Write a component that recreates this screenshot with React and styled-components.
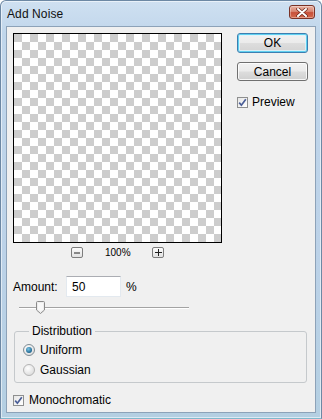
import React from 'react';
import styled, { createGlobalStyle, css } from 'styled-components';

const GlobalStyle = createGlobalStyle`
    html, body {
        margin: 0;
        padding: 0;
        background: #ffffff;
    }
    body {
        font-family: 'Liberation Sans', Arial, sans-serif;
        font-size: 12px;
        color: #000;
    }
`;

const WINDOW = styled.div`
    box-sizing: border-box;
    width: 322px;
    height: 419px;
    display: flex;
    flex-direction: column;
    border: 1px solid #6d88a4;
    border-bottom-color: #7fb8cc;
    border-radius: 6px 6px 0 0;
    padding: 0 5px 5px;
    background: linear-gradient(180deg, #cfe0f1 0%, #c0d6eb 8%, #bcd2e8 60%, #b4cfe2 100%);
    box-shadow: inset 0 0 0 1px rgba(255, 255, 255, 0.55);
`;

const TITLEBAR = styled.div`
    height: 25px;
    display: flex;
    align-items: center;
    justify-content: space-between;
    padding-left: 1px;

    .title {
        font-size: 12px;
        color: #111;
        letter-spacing: 0.1px;
    }
`;

const CLOSE = styled.div`
    align-self: flex-start;
    margin-top: 4px;
    margin-right: 1px;
    width: 26px;
    height: 14px;
    box-sizing: border-box;
    border: 1px solid #7a3226;
    border-radius: 3px;
    background: linear-gradient(180deg, #e9b3a4 0%, #d98672 45%, #c7503a 55%, #d66a4c 100%);
    display: flex;
    align-items: center;
    justify-content: center;
    box-shadow: inset 0 0 0 1px rgba(255, 255, 255, 0.35);
`;

const CLIENT = styled.div`
    flex: 1;
    background: #f0f0f0;
    border: 1px solid #8da2b8;
    padding: 6px 7px 0 6px;
    display: flex;
    flex-direction: column;
`;

const TOPROW = styled.div`
    display: flex;
    gap: 15px;
`;

const PREVIEWCOL = styled.div`
    width: 209px;
    display: flex;
    flex-direction: column;
`;

const PREVIEWBOX = styled.div`
    box-sizing: border-box;
    width: 209px;
    height: 210px;
    border: 1px solid #000;
    background-color: #fff;
    background-image: conic-gradient(#fff 25%, #cdcdcd 0 50%, #fff 0 75%, #cdcdcd 0);
    background-size: 16px 16px;
`;

const ZOOMBAR = styled.div`
    margin-top: 4px;
    height: 11px;
    display: flex;
    align-items: center;
    justify-content: center;
    gap: 22px;
    font-size: 10px;

    span {
        width: 25px;
        text-align: center;
        white-space: nowrap;
    }
`;

const ZOOMBTN = styled.div`
    box-sizing: border-box;
    width: 12px;
    height: 11px;
    border: 1px solid #7d7d7d;
    border-radius: 2px;
    background: linear-gradient(180deg, #fbfbfb, #e2e2e2);
    display: flex;
    align-items: center;
    justify-content: center;
`;

const SIDECOL = styled.div`
    width: 71px;
    display: flex;
    flex-direction: column;
`;

const BUTTON = styled.div`
    box-sizing: border-box;
    height: ${p => (p.$default ? 20 : 19)}px;
    margin-bottom: 9px;
    border: 1px solid #707070;
    border-radius: 3px;
    background: linear-gradient(180deg, #f2f2f2 0%, #ebebeb 48%, #dddddd 52%, #cfcfcf 100%);
    box-shadow: inset 0 0 0 1px rgba(255, 255, 255, 0.8);
    display: flex;
    align-items: center;
    justify-content: center;
    font-size: 12px;
    color: #000;

    ${p => p.$default && css`
        border-color: #3c7fb1;
        box-shadow: inset 0 0 0 1px #5fd0f0, inset 0 0 0 2px rgba(220, 244, 252, 0.8);
        background: linear-gradient(180deg, #f2f2f2 0%, #ebebeb 48%, #dddddd 52%, #d3d3d3 100%);
    `}
`;

const CHECKROW = styled.div`
    display: flex;
    align-items: center;
    gap: ${p => p.$gap || 5}px;
    margin-top: ${p => p.$top || 0}px;
    height: 12px;
`;

const BOX = styled.div`
    box-sizing: border-box;
    width: 11px;
    height: 11px;
    border: 1px solid #8e8f8f;
    background: linear-gradient(135deg, #e6e6e6, #ffffff);
    display: flex;
    align-items: center;
    justify-content: center;
`;

const AMOUNTROW = styled.div`
    margin-top: 18px;
    display: flex;
    align-items: center;
    height: 21px;

    .label {
        width: 53px;
    }
    .unit {
        margin-left: 5px;
    }
`;

const INPUT = styled.div`
    box-sizing: border-box;
    width: 55px;
    height: 21px;
    border: 1px solid #e3e9ef;
    border-top-color: #abadb3;
    background: #fff;
    padding-left: 5px;
    display: flex;
    align-items: center;
`;

const SLIDER = styled.div`
    margin: 5px 0 0 6px;
    width: 170px;
    height: 12px;
    display: flex;
    align-items: center;

    .track {
        position: relative;
        width: 100%;
        height: 2px;
        border-top: 1px solid #a3a3a3;
        border-bottom: 1px solid #ffffff;
        box-sizing: border-box;
    }
    .thumb {
        position: absolute;
        left: 17px;
        top: -7px;
    }
`;

const GROUP = styled.fieldset`
    margin: 10px 0 0 1px;
    width: 293px;
    box-sizing: border-box;
    min-width: 0;
    border: 1px solid #c5c9cc;
    border-radius: 3px;
    padding: 0 0 2px 8px;

    legend {
        margin-left: 6px;
        padding: 0 3px;
        line-height: 14px;
        font-size: 12px;
    }
`;

const RADIOROW = styled.div`
    height: 20px;
    display: flex;
    align-items: center;
    gap: 5px;
    margin-top: ${p => p.$top || 0}px;
`;

const Check = () => (
    <BOX>
        <svg width="9" height="9" viewBox="0 0 9 9">
            <path d="M1.2 4.6 L3.4 7.2 L7.8 1.2" fill="none" stroke="#4a5e97" strokeWidth="1.7" />
        </svg>
    </BOX>
);

const Radio = ({ checked }) => (
    <svg width="12" height="12" viewBox="0 0 12 12">
        <defs>
            <radialGradient id="rbg" cx="40%" cy="35%" r="70%">
                <stop offset="0" stopColor="#ffffff" />
                <stop offset="1" stopColor="#dadada" />
            </radialGradient>
            <radialGradient id="rdot" cx="40%" cy="35%" r="70%">
                <stop offset="0" stopColor="#7ac6e6" />
                <stop offset="1" stopColor="#135a86" />
            </radialGradient>
        </defs>
        <circle cx="6" cy="6" r="5.5" fill="url(#rbg)" stroke={checked ? '#7f8c94' : '#b4b4b4'} />
        {checked && <circle cx="6" cy="6" r="3" fill="url(#rdot)" />}
    </svg>
);

const App = () => {
    return (
        <>
            <GlobalStyle />
            <WINDOW>
                <TITLEBAR>
                    <span className="title">Add Noise</span>
                    <CLOSE>
                        <svg width="12" height="9" viewBox="0 0 12 9">
                            <path d="M2 1 L10 8 M10 1 L2 8" stroke="#6a2418" strokeWidth="3.4" strokeLinecap="round" />
                            <path d="M2 1 L10 8 M10 1 L2 8" stroke="#ffffff" strokeWidth="2" strokeLinecap="round" />
                        </svg>
                    </CLOSE>
                </TITLEBAR>
                <CLIENT>
                    <TOPROW>
                        <PREVIEWCOL>
                            <PREVIEWBOX />
                            <ZOOMBAR>
                                <ZOOMBTN>
                                    <svg width="6" height="6" viewBox="0 0 6 6">
                                        <path d="M0 3 H6" stroke="#222" strokeWidth="1" />
                                    </svg>
                                </ZOOMBTN>
                                <span>100%</span>
                                <ZOOMBTN>
                                    <svg width="7" height="7" viewBox="0 0 7 7">
                                        <path d="M0 3.5 H7 M3.5 0 V7" stroke="#222" strokeWidth="1" />
                                    </svg>
                                </ZOOMBTN>
                            </ZOOMBAR>
                        </PREVIEWCOL>
                        <SIDECOL>
                            <BUTTON $default>OK</BUTTON>
                            <BUTTON>Cancel</BUTTON>
                            <CHECKROW $gap={4} $top={6}>
                                <Check />
                                <span>Preview</span>
                            </CHECKROW>
                        </SIDECOL>
                    </TOPROW>

                    <AMOUNTROW>
                        <span className="label">Amount:</span>
                        <INPUT>50</INPUT>
                        <span className="unit">%</span>
                    </AMOUNTROW>

                    <SLIDER>
                        <div className="track">
                            <svg className="thumb" width="9" height="13" viewBox="0 0 9 13">
                                <path d="M1.5 0.5 H7.5 Q8.5 0.5 8.5 1.5 V9 L4.5 12.5 L0.5 9 V1.5 Q0.5 0.5 1.5 0.5 Z" fill="#ececec" stroke="#8a8a8a" />
                                <path d="M2 2 H7 V8.5 L4.5 10.5 L2 8.5 Z" fill="#f8f8f8" />
                            </svg>
                        </div>
                    </SLIDER>

                    <GROUP>
                        <legend>Distribution</legend>
                        <RADIOROW $top={2}>
                            <Radio checked />
                            <span>Uniform</span>
                        </RADIOROW>
                        <RADIOROW>
                            <Radio />
                            <span>Gaussian</span>
                        </RADIOROW>
                    </GROUP>

                    <CHECKROW $top={11}>
                        <Check />
                        <span>Monochromatic</span>
                    </CHECKROW>
                </CLIENT>
            </WINDOW>
        </>
    );
};

export default App;
